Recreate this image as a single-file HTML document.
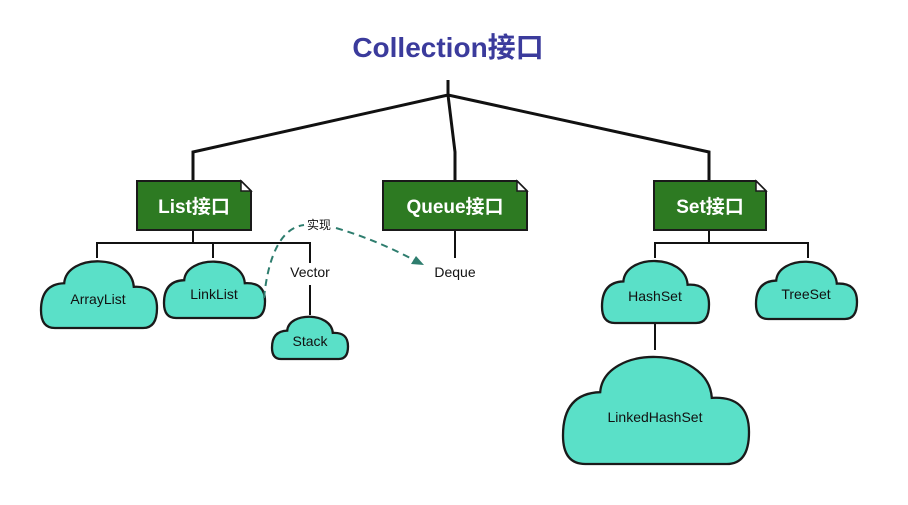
<!DOCTYPE html>
<html><head><meta charset="utf-8"><style>
html,body{margin:0;padding:0;background:#fff;}
svg{display:block}
text{font-family:"Liberation Sans","Noto Sans CJK SC",sans-serif;}
</style></head><body>
<svg width="908" height="505" viewBox="0 0 908 505" xmlns="http://www.w3.org/2000/svg">
<text x="448" y="57" text-anchor="middle" font-size="28" font-weight="bold" fill="#3b3b9c">Collection接口</text>
<g stroke="#111" stroke-width="3" fill="none">
<path d="M448 80 L448 95 L193 152 L193 181"/>
<path d="M448 95 L455 152 L455 181"/>
<path d="M448 95 L709 152 L709 181"/>
</g>
<g stroke="#111" stroke-width="2" fill="none">
<path d="M193 230 V243 M97 258 V243 H310 V263 M213 243 V258"/>
<path d="M310 285 V315"/>
<path d="M455 230 V258"/>
<path d="M709 230 V243 M655 258 V243 H808 V258"/>
<path d="M655 323 V350"/>
</g>
<g fill="#2d7a22" stroke="#1a1a1a" stroke-width="2">
<path d="M137 181 H241 L251 191 V230 H137 Z"/>
<path d="M383 181 H517 L527 191 V230 H383 Z"/>
<path d="M654 181 H756 L766 191 V230 H654 Z"/>
</g>
<g fill="#fff" stroke="#1a1a1a" stroke-width="1.5">
<path d="M241 181 V191 H251 Z"/>
<path d="M517 181 V191 H527 Z"/>
<path d="M756 181 V191 H766 Z"/>
</g>
<g fill="#fff" font-size="19" font-weight="bold" text-anchor="middle">
<text x="194" y="213">List接口</text>
<text x="455" y="213">Queue接口</text>
<text x="710" y="213">Set接口</text>
</g>
<g fill="#5ae0c8" stroke="#1a1a1a" stroke-width="2.3">
<path vector-effect="non-scaling-stroke" transform="translate(41 257) scale(1.16 0.71)" d="M12 100 Q0 100 0 75 Q0 38 20 37 C22 -5 78 -5 80 42 Q100 40 100 72 Q100 100 88 100 Z"/>
<path vector-effect="non-scaling-stroke" transform="translate(164 258) scale(1.01 0.6)" d="M12 100 Q0 100 0 75 Q0 38 20 37 C22 -5 78 -5 80 42 Q100 40 100 72 Q100 100 88 100 Z"/>
<path vector-effect="non-scaling-stroke" transform="translate(272 314) scale(0.76 0.45)" d="M12 100 Q0 100 0 75 Q0 38 20 37 C22 -5 78 -5 80 42 Q100 40 100 72 Q100 100 88 100 Z"/>
<path vector-effect="non-scaling-stroke" transform="translate(602 257) scale(1.07 0.66)" d="M12 100 Q0 100 0 75 Q0 38 20 37 C22 -5 78 -5 80 42 Q100 40 100 72 Q100 100 88 100 Z"/>
<path vector-effect="non-scaling-stroke" transform="translate(756 258) scale(1.01 0.61)" d="M12 100 Q0 100 0 75 Q0 38 20 37 C22 -5 78 -5 80 42 Q100 40 100 72 Q100 100 88 100 Z"/>
<path vector-effect="non-scaling-stroke" transform="translate(563 350) scale(1.86 1.14)" d="M12 100 Q0 100 0 75 Q0 38 20 37 C22 -5 78 -5 80 42 Q100 40 100 72 Q100 100 88 100 Z"/>
</g>
<g fill="#111" font-size="14" text-anchor="middle">
<text x="98" y="304">ArrayList</text>
<text x="214" y="299">LinkList</text>
<text x="310" y="346">Stack</text>
<text x="655" y="301">HashSet</text>
<text x="806" y="299">TreeSet</text>
<text x="655" y="422">LinkedHashSet</text>
<text x="310" y="277">Vector</text>
<text x="455" y="277">Deque</text>
<text x="319" y="229" font-size="12">实现</text>
</g>
<g stroke="#2e7d6e" stroke-width="2" fill="none" stroke-dasharray="7 5">
<path d="M264 298 C268 258 280 228 304 225"/>
<path d="M336 228 C370 238 395 250 416 261"/>
</g>
<path d="M424 265 L411 264 L416 256 Z" fill="#2e7d6e"/>
</svg>
</body></html>
